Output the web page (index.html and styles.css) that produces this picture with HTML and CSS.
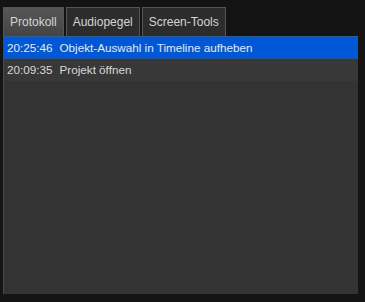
FILE: index.html
```html
<!DOCTYPE html>
<html lang="de">
<head>
    <meta charset="UTF-8">
    <title>Protokoll</title>
    <link rel="stylesheet" href="styles.css">
</head>
<body>
    <div class="dock">
        <div class="tabs">
            <div class="tab active">Protokoll</div>
            <div class="tab">Audiopegel</div>
            <div class="tab">Screen-Tools</div>
        </div>
        <div class="panel">
            <div class="entry selected"><span class="time">20:25:46</span>Objekt-Auswahl in Timeline aufheben</div>
            <div class="entry"><span class="time">20:09:35</span>Projekt öffnen</div>
        </div>
    </div>
</body>
</html>
```

FILE: styles.css
```css
body {
    margin: 0;
    background-color: #141414;
    font-family: "Liberation Sans", Arial, sans-serif;
    font-size: 12px;
    color: #d8d8d8;
}

.dock {
    padding: 7px 7px 8px 3px;
    height: 302px;
    box-sizing: border-box;
    display: flex;
    flex-direction: column;
}

.tabs {
    display: flex;
    gap: 2px;
}

.tab {
    height: 29px;
    line-height: 28px;
    padding: 0 6px;
    border: 1px solid #555;
    border-bottom: none;
    box-sizing: border-box;
    background-color: #2c2c2c;
    color: #d4d4d4;
}

.tab.active {
    background: linear-gradient(#565656, #444);
}

.panel {
    flex: 1;
    background-color: #333;
    border-top: 1px solid #555;
    border-left: 1px solid #4a4a4a;
}

.entry {
    height: 22px;
    line-height: 22px;
    padding-left: 3px;
    font-size: 11.7px;
    background-color: #383838;
    white-space: nowrap;
}

.entry.selected {
    background-color: #0058d6;
    color: #e8e8e8;
}

.time {
    margin-right: 7px;
}
```
